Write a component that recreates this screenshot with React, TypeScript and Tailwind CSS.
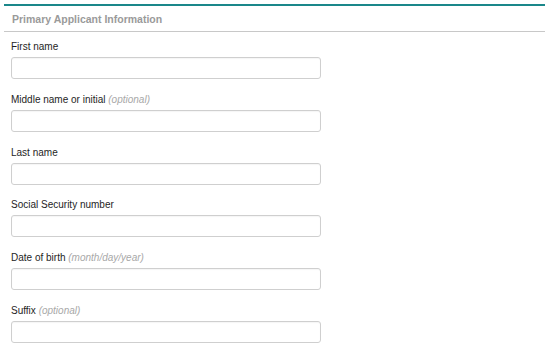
import React from "react";

const fields: { label: string; hint?: string }[] = [
  { label: "First name" },
  { label: "Middle name or initial", hint: "(optional)" },
  { label: "Last name" },
  { label: "Social Security number" },
  { label: "Date of birth", hint: "(month/day/year)" },
  { label: "Suffix", hint: "(optional)" },
];

export default function App() {
  return (
    <div
      className="w-[550px] h-[348px] bg-white overflow-hidden"
      style={{ fontFamily: '"Liberation Sans", Arial, Helvetica, sans-serif' }}
    >
      <div className="mx-[4px] mt-[4px] w-[541px] border-t-2 border-[#1a878a]">
        <div className="h-[26px] border-b border-[#c8c8c8] pl-[8px] flex items-center">
          <span className="text-[10.5px] font-bold text-[#9a9a9a] leading-[12px] pt-[1px]">
            Primary Applicant Information
          </span>
        </div>
        <div className="pl-[7px] pt-[9px] flex flex-col gap-[14.8px]">
          {fields.map((f) => (
            <div key={f.label} className="flex flex-col gap-[4px]">
              <label className="text-[10px] leading-[12px] text-[#1e1e1e]">
                {f.label}
                {f.hint && (
                  <span className="italic text-[#a8a8a8]"> {f.hint}</span>
                )}
              </label>
              <input
                type="text"
                className="w-[310px] h-[22px] border border-[#cfcfcf] rounded-[3px] bg-white shadow-[inset_0_1px_1px_rgba(0,0,0,0.04)] outline-none"
              />
            </div>
          ))}
        </div>
      </div>
    </div>
  );
}
